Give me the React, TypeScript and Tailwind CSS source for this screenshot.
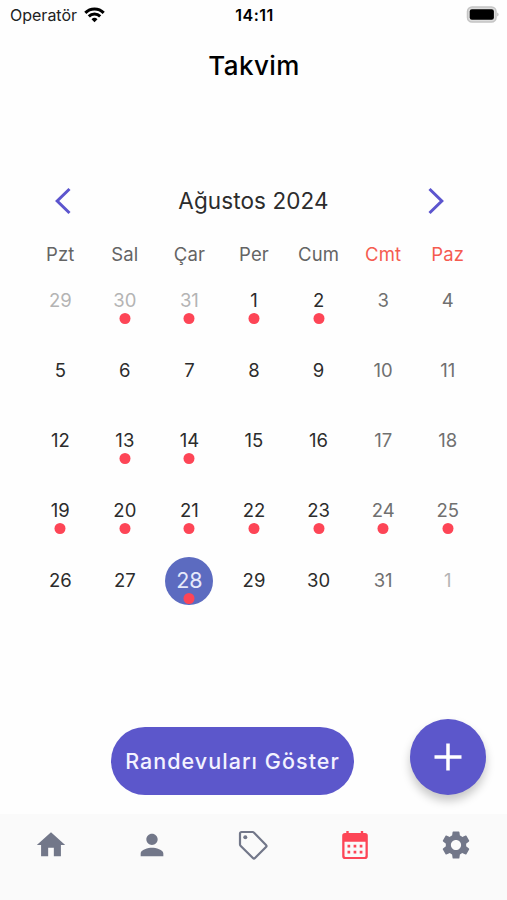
import { MdHome, MdPerson, MdSettings } from 'react-icons/md';
import clsx from 'clsx';

interface Day {
  day: number;
  outside?: boolean;
  event?: boolean;
  selected?: boolean;
}

interface IconProps {
  className?: string;
}

const weekdays = ['Pzt', 'Sal', 'Çar', 'Per', 'Cum', 'Cmt', 'Paz'];

const eventDays = [1, 2, 13, 14, 19, 20, 21, 22, 23, 24, 25, 28];

const days: Day[] = [
  { day: 29, outside: true },
  { day: 30, outside: true, event: true },
  { day: 31, outside: true, event: true },
  ...Array.from({ length: 31 }, (_, i) => ({
    day: i + 1,
    event: eventDays.includes(i + 1),
    selected: i + 1 === 28,
  })),
  { day: 1, outside: true },
];

function TagIcon({ className }: IconProps) {
  return (
    <svg className={className} viewBox="0 0 34 34" fill="none" stroke="currentColor" strokeWidth="2.2" strokeLinejoin="round">
      <path d="M5.5 4h11.2a1.5 1.5 0 0 1 1.1.5L30 16.9a1.5 1.5 0 0 1 0 2.1L19 30a1.5 1.5 0 0 1-2.1 0L4.5 17.7a1.5 1.5 0 0 1-.5-1.1V5.5A1.5 1.5 0 0 1 5.5 4z" />
      <circle cx="9.3" cy="9.3" r="2" fill="currentColor" stroke="none" />
    </svg>
  );
}

function CalendarIcon({ className }: IconProps) {
  return (
    <svg className={className} viewBox="0.5 0 34 34" fill="currentColor">
      <path d="M10 3v4M24.5 3v4" stroke="currentColor" strokeWidth="2.4" />
      <path
        fillRule="evenodd"
        d="M7.5 5h20a2.8 2.8 0 0 1 2.8 2.8v20.4a2.8 2.8 0 0 1-2.8 2.8h-20a2.8 2.8 0 0 1-2.8-2.8V7.8A2.8 2.8 0 0 1 7.5 5zM7 13.7v14a1.2 1.2 0 0 0 1.2 1.2h18.6a1.2 1.2 0 0 0 1.2-1.2v-14z"
      />
      <path d="M10 16.8h2.7v2.7H10zM16.1 16.8h2.7v2.7h-2.7zM22.2 16.8h2.7v2.7h-2.7zM10 22.8h2.7v2.7H10zM16.1 22.8h2.7v2.7h-2.7zM22.2 22.8h2.7v2.7h-2.7z" />
    </svg>
  );
}

const tabs = [
  { name: 'home', icon: MdHome },
  { name: 'profile', icon: MdPerson },
  { name: 'offers', icon: TagIcon },
  { name: 'calendar', icon: CalendarIcon, active: true },
  { name: 'settings', icon: MdSettings },
];

function StatusBar() {
  return (
    <div className="grid h-[30px] grid-cols-3 items-center pl-[10px] pr-[8px] text-black">
      <div className="flex items-center">
        <span className="text-[16px] text-[#222]">Operatör</span>
        <svg className="ml-[7px] h-[16px] w-[21px]" viewBox="0 0 21 16" fill="none" stroke="currentColor" strokeWidth="3">
          <path d="M1.3 5.9a13 13 0 0 1 18.4 0" />
          <path d="M4.8 9.4a8.1 8.1 0 0 1 11.4 0" />
          <path d="M10.5 15.2l-3-3a4.3 4.3 0 0 1 6 0z" fill="currentColor" stroke="none" />
        </svg>
      </div>
      <span className="text-center text-[16px] font-semibold tracking-[0.5px]">14:11</span>
      <svg className="mt-[-1px] h-[17px] w-[33px] justify-self-end" viewBox="0 0 33 17">
        <rect x="1.5" y="1" width="28.5" height="15" rx="4.5" fill="#ddd" stroke="#c4c4c4" strokeWidth="1.5" />
        <rect x="3.7" y="3.2" width="24.2" height="10.6" rx="2.2" fill="#000" />
        <path d="M31.3 6.5c1.6.5 1.6 3.5 0 4z" fill="#b5b5b5" />
      </svg>
    </div>
  );
}

function DayCell({ item, weekend }: { item: Day; weekend: boolean }) {
  return (
    <div className="relative flex h-[70px] items-center justify-center">
      <span
        className={clsx(
          'flex h-[48px] w-[48px] items-center justify-center rounded-full',
          item.selected
            ? 'bg-[#5c6bc0] pb-px text-[21.5px] text-[#e6e9fa]'
            : 'text-[18.5px]',
          !item.selected && item.outside && 'text-[#b4b4b4]',
          !item.selected && !item.outside && (weekend ? 'text-[#707070]' : 'text-[#2c2c2c]')
        )}
      >
        {item.day}
      </span>
      {item.event && (
        <span className="absolute bottom-[12px] left-1/2 h-[11px] w-[11px] -translate-x-1/2 rounded-full bg-[#fd4556]" />
      )}
    </div>
  );
}

export default function App() {
  return (
    <div className="flex h-[900px] w-full flex-col overflow-hidden bg-[#fefefe] font-['Inter','Liberation_Sans',sans-serif]">
      <StatusBar />

      <h1 className="mt-[16px] pl-px text-center text-[26px] leading-[40px] font-medium tracking-[0.4px] text-black">Takvim</h1>

      {/* Month navigation */}
      <div className="mt-[94px] flex h-[42px] items-center pr-[62px] pl-[54px] text-[#5c55ce]">
        <button aria-label="Önceki ay">
          <svg className="h-[28px] w-[18px]" viewBox="0 0 18 28" fill="none" stroke="currentColor" strokeWidth="3">
            <path d="M15.5 2L3.2 14l12.3 12" />
          </svg>
        </button>
        <h2 className="flex-1 pl-2 text-center text-[22.5px] tracking-[0.1px] text-[#2c2c2c]">Ağustos 2024</h2>
        <button aria-label="Sonraki ay">
          <svg className="h-[28px] w-[18px]" viewBox="0 0 18 28" fill="none" stroke="currentColor" strokeWidth="3">
            <path d="M2.5 2l12.3 12L2.5 26" />
          </svg>
        </button>
      </div>

      {/* Month grid */}
      <div className="mt-[21px] grid grid-cols-7 pr-[27px] pl-[28px] text-center">
        {weekdays.map((name, i) => (
          <span
            key={name}
            className={clsx('h-[23px] text-[18.5px] leading-[22px] tracking-[0.1px]', i > 4 ? 'text-[#f55b50]' : 'text-[#646464]')}
          >
            {name}
          </span>
        ))}
        {days.map((item, i) => (
          <DayCell key={i} item={item} weekend={i % 7 > 4} />
        ))}
      </div>

      <div className="mt-auto flex h-[99px] shrink-0 items-start justify-end pr-[21px]">
        <button className="mt-[12px] mr-[56px] h-[68px] w-[243px] rounded-full bg-[#5c57cb] pt-px text-[21.5px] font-medium tracking-[1.05px] whitespace-nowrap text-[#f3f2ff]">
          Randevuları Göster
        </button>
        <button
          aria-label="Ekle"
          className="mt-[4px] flex h-[76px] w-[76px] items-center justify-center rounded-full bg-[#5c57cb] text-white shadow-[0_6px_10px_rgba(0,0,0,0.22)]"
        >
          <svg className="h-[28px] w-[28px]" viewBox="0 0 28 28" fill="none" stroke="currentColor" strokeWidth="3.5">
            <path d="M14 .5v27M.5 14h27" />
          </svg>
        </button>
      </div>

      <nav className="grid h-[86px] shrink-0 grid-cols-5 bg-[#fafafa] pt-[14px]">
        {tabs.map(({ name, icon: Icon, active }) => (
          <button key={name} aria-label={name} className="flex items-start justify-center">
            <Icon className={clsx('h-[34px] w-[34px]', active ? 'text-[#fd4556]' : 'text-[#727789]')} />
          </button>
        ))}
      </nav>
    </div>
  );
}
